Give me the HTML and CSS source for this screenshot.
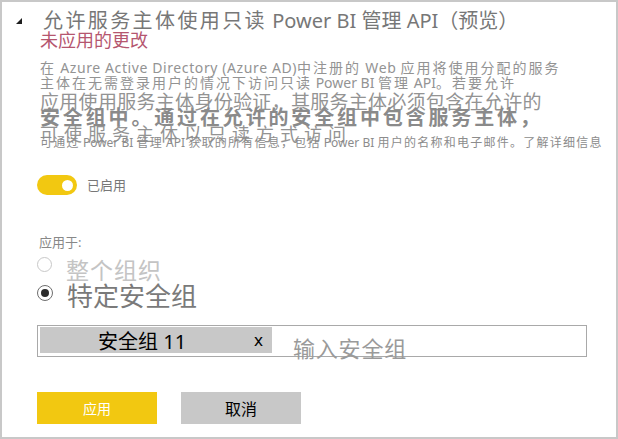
FILE: index.html
```html
<!DOCTYPE html>
<html lang="zh-CN">
<head>
<meta charset="utf-8">
<title>允许服务主体使用只读 Power BI 管理 API</title>
<link rel="stylesheet" href="styles.css">
</head>
<body>
<div class="panel">
  <div class="head">
    <svg class="caret" width="6" height="6" viewBox="0 0 6 6"><polygon points="6,0 6,6 0,6"/></svg>
    <div class="title"><span class="t1">允许服务主体使用只读</span> Power BI 管理 API<span class="t2">（预览）</span></div>
  </div>
  <div class="content">
    <div class="unapplied">未应用的更改</div>
    <div class="ln p1">在<span class="l"> Azure Active Directory (Azure AD)</span>中注册的<span class="l"> Web </span>应用将使用分配的服务</div>
    <div class="ln p2">主体在无需登录用户的情况下访问只读<span class="l"> Power BI </span>管理<span class="l"> API</span>。若要允许</div>
    <div class="ln p3">应用使用服务主体身份验证，其服务主体必须包含在允许的</div>
    <div class="ln p4">安全组中。通过在允许的安全组中包含服务主体，</div>
    <div class="ln p5">可使服务主体以只读方式访问</div>
    <div class="ln p6">可通过<span class="l"> Power BI </span>管理<span class="l"> API </span>获取的所有信息，包括<span class="l"> Power BI </span>用户的名称和电子邮件。了解详细信息</div>

    <div class="toggle-row">
      <div class="toggle"><div class="knob"></div></div>
      <div class="toggle-label">已启用</div>
    </div>

    <div class="applyto">应用于:</div>

    <div class="radio-row r1">
      <div class="radio"></div>
      <div class="radio-text">整个组织</div>
    </div>
    <div class="radio-row r2">
      <div class="radio on"><div class="dot"></div></div>
      <div class="radio-text">特定安全组</div>
    </div>

    <div class="tagbox">
      <div class="chip">
        <span class="chip-text">安全组 11</span>
        <span class="chip-x">x</span>
      </div>
      <div class="placeholder">输入安全组</div>
    </div>

    <div class="buttons">
      <div class="btn apply">应用</div>
      <div class="btn cancel">取消</div>
    </div>
  </div>
</div>
</body>
</html>
```
FILE: styles.css
```css
html, body {
  margin: 0;
  padding: 0;
  background: #fff;
}
body {
  font-family: "Noto Sans", "Noto Sans CJK SC", sans-serif;
}
.panel {
  width: 618px;
  height: 439px;
  box-sizing: border-box;
  border: 2px solid #c8c8c8;
  padding-top: 9px;
  overflow: hidden;
}
.head {
  display: flex;
  align-items: center;
  gap: 21px;
  padding-left: 14px;
  height: 20px;
}
.caret {
  display: block;
  fill: #1e1e1e;
  flex: none;
}
.title {
  font-size: 20px;
  line-height: 20px;
  color: #777;
  white-space: nowrap;
}
.t1 { letter-spacing: 2.4px; }
.t2 { letter-spacing: 0; }

.content {
  padding-left: 35px;
}
.unapplied {
  margin-left: 3px;
  font-size: 18px;
  line-height: 18px;
  color: #b5566f;
  white-space: nowrap;
}
.ln {
  margin-left: 3px;
  white-space: nowrap;
  color: #939393;
}
.l { letter-spacing: 0; }
.p1 {
  margin-top: 11.8px;
  font-size: 14px;
  line-height: 14px;
  letter-spacing: 2px;
}
.p1 .l { letter-spacing: 0.6px; }
.p2 {
  margin-top: 1.7px;
  font-size: 14px;
  line-height: 14px;
  letter-spacing: 2px;
}
.p3 {
  margin-top: 2.8px;
  font-size: 19px;
  line-height: 19px;
  letter-spacing: 0.3px;
}
.p4 {
  margin-top: -4.1px;
  font-size: 20px;
  line-height: 20px;
  font-weight: bold;
  letter-spacing: 2.85px;
  color: #8a8a8a;
}
.p5 {
  margin-top: -2.8px;
  font-size: 18px;
  line-height: 18px;
  letter-spacing: 6px;
}
.p6 {
  margin-top: -6.4px;
  font-size: 12px;
  line-height: 12px;
  letter-spacing: 1.25px;
  color: #8c8c8c;
}

.toggle-row {
  margin-top: 26px;
  display: flex;
  align-items: center;
  gap: 10px;
}
.toggle {
  width: 40px;
  height: 20px;
  border-radius: 10px;
  background: #f2c811;
  display: flex;
  align-items: center;
  justify-content: flex-end;
  padding-right: 4px;
  box-sizing: border-box;
}
.knob {
  width: 11px;
  height: 11px;
  border-radius: 50%;
  background: #fff;
}
.toggle-label {
  font-size: 13px;
  line-height: 13px;
  color: #777;
}

.applyto {
  margin-top: 41px;
  margin-left: 2px;
  font-size: 13px;
  line-height: 13px;
  color: #888;
}

.radio-row {
  display: flex;
  align-items: flex-start;
  gap: 14px;
}
.radio {
  width: 15px;
  height: 15px;
  box-sizing: border-box;
  border: 1px solid #c8c8c8;
  border-radius: 50%;
  flex: none;
}
.radio.on {
  width: 16px;
  height: 16px;
  border: 1.5px solid #6e6e6e;
  display: flex;
  align-items: center;
  justify-content: center;
  margin-top: 2.6px;
}
.dot {
  width: 8px;
  height: 8px;
  border-radius: 50%;
  background: #2a2a2a;
}
.r1 { margin-top: 8px; }
.r1 .radio-text {
  font-size: 23px;
  line-height: 23px;
  letter-spacing: 1px;
  color: #c4c4c4;
  margin-top: 1.5px;
}
.r2 { margin-top: 1.2px; }
.r2 .radio-text {
  font-size: 26px;
  line-height: 26px;
  color: #7a7a7a;
}

.tagbox {
  margin-top: 16.6px;
  width: 550px;
  height: 32px;
  box-sizing: border-box;
  border: 1px solid #a9a9a9;
  padding: 1px 2px;
  display: flex;
  align-items: flex-start;
  gap: 21px;
}
.chip {
  width: 232px;
  height: 26px;
  box-sizing: border-box;
  background: #c8c8c8;
  display: flex;
  align-items: flex-start;
  padding: 5px 9px 0 58px;
  flex: none;
}
.chip-text {
  font-size: 20px;
  line-height: 20px;
  color: #000;
  white-space: nowrap;
}
.chip-x {
  margin-left: auto;
  margin-top: -2px;
  font-size: 17px;
  line-height: 20px;
  color: #000;
}
.placeholder {
  margin-top: 9.5px;
  font-size: 22px;
  line-height: 22px;
  letter-spacing: 0.8px;
  color: #9a9a9a;
  white-space: nowrap;
}

.buttons {
  margin-top: 35px;
  display: flex;
  gap: 24px;
}
.btn {
  width: 120px;
  height: 32px;
  display: flex;
  align-items: center;
  justify-content: center;
}
.apply {
  background: #f2c811;
  color: #fff;
  font-size: 14px;
}
.cancel {
  background: #c8c8c8;
  color: #000;
  font-size: 16px;
}
```
